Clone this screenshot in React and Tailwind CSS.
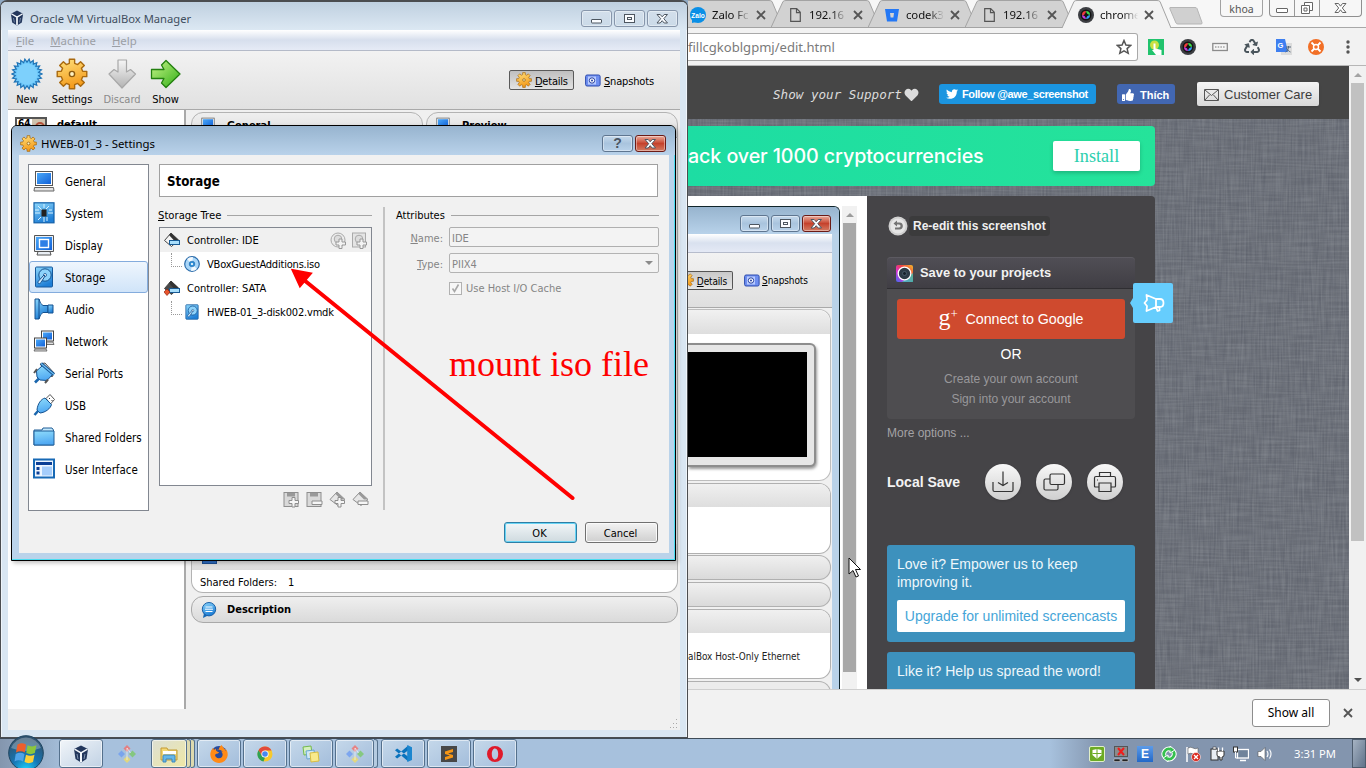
import React from "react";
import { FaTwitter, FaThumbsUp, FaHeart, FaRecycle } from "react-icons/fa";
import { SiFirefoxbrowser } from "react-icons/si";

/* ---------- shared gradients ---------- */
function Defs() {
  return (
    <svg className="absolute h-0 w-0" aria-hidden="true">
      <defs>
        <linearGradient id="blue" x1="0" y1="0" x2="0.4" y2="1"><stop offset="0" stopColor="#8ed8fc" /><stop offset="1" stopColor="#1f7fd6" /></linearGradient>
        <linearGradient id="folder" x1="0" y1="0" x2="0.2" y2="1"><stop offset="0" stopColor="#8fdcfb" /><stop offset="1" stopColor="#4fa8f2" /></linearGradient>
        <linearGradient id="screen" x1="0" y1="0" x2="1" y2="1"><stop offset="0" stopColor="#4aa8f8" /><stop offset="1" stopColor="#1261d8" /></linearGradient>
        <linearGradient id="gold" x1="0" y1="0" x2="0.3" y2="1"><stop offset="0" stopColor="#ffe27e" /><stop offset="1" stopColor="#f49b1c" /></linearGradient>
        <linearGradient id="grey" x1="0" y1="0" x2="0" y2="1"><stop offset="0" stopColor="#f6f6f6" /><stop offset="1" stopColor="#b3b3b3" /></linearGradient>
        <linearGradient id="green" x1="0" y1="0" x2="1" y2="1"><stop offset="0" stopColor="#c9f58a" /><stop offset="1" stopColor="#2fae14" /></linearGradient>
        <linearGradient id="rainbow" x1="0" y1="1" x2="1" y2="0"><stop offset="0" stopColor="#3f6df5" /><stop offset="0.35" stopColor="#d92fd0" /><stop offset="0.65" stopColor="#f0453a" /><stop offset="1" stopColor="#f5c02c" /></linearGradient>
        <radialGradient id="orb" cx="0.5" cy="1" r="0.9"><stop offset="0" stopColor="#1fd5ff" /><stop offset="0.45" stopColor="#1576b4" /><stop offset="1" stopColor="#31536f" /></radialGradient>
      </defs>
    </svg>
  );
}

/* ---------- icons ---------- */
const gearPath = (n, R, r, c) => {
  let d = "";
  for (let i = 0; i < n; i++) {
    const a = (i / n) * 2 * Math.PI - Math.PI / 2, s = Math.PI / n;
    const p = (rad, an) => `${(c + rad * Math.cos(an)).toFixed(2)} ${(c + rad * Math.sin(an)).toFixed(2)}`;
    d += `${i ? "L" : "M"}${p(r, a - s * 0.62)}L${p(R, a - s * 0.45)}L${p(R, a + s * 0.45)}L${p(r, a + s * 0.62)}`;
  }
  return d + "Z";
};
const starPath = (n, R, r, c) => {
  let d = "";
  for (let i = 0; i < n * 2; i++) {
    const a = (i / n) * Math.PI, q = i % 2 ? r : R;
    d += `${i ? "L" : "M"}${(c + q * Math.cos(a)).toFixed(2)} ${(c + q * Math.sin(a)).toFixed(2)}`;
  }
  return d + "Z";
};
const Gear = ({ className }) => (
  <svg viewBox="0 0 32 32" className={className}>
    <path d={gearPath(8, 15, 11, 16)} fill="url(#gold)" stroke="#a9690f" strokeWidth="1.4" strokeLinejoin="round" />
    <circle cx="16" cy="16" r="2.6" fill="#fff3c4" stroke="#8b5a10" strokeWidth="1.4" />
  </svg>
);
const NewIcon = () => (
  <svg viewBox="0 0 32 32" className="h-8 w-8">
    <path d={starPath(22, 15, 11.8, 16)} fill="#6ec9fb" stroke="#1f73b5" strokeWidth="1.2" />
    <circle cx="16" cy="16" r="10.4" fill="#7dd0fc" />
  </svg>
);
const DiscardIcon = () => (
  <svg viewBox="0 0 32 32" className="h-8 w-8">
    <path d="M12 2h8.500v12l4-2.500 5 4.500L16 30 3 16l5-4.500 4 2.500z" fill="url(#grey)" stroke="#a8a8a8" strokeWidth="1.200" strokeLinejoin="round" />
  </svg>
);
const ShowIcon = () => (
  <svg viewBox="0 0 32 32" className="h-8 w-8">
    <path d="M1.500 11.500H14L11.500 7 16 2.500 30 16 16 29.500 11.500 25 14 20.500H1.500z" fill="url(#green)" stroke="#23800f" strokeWidth="1.300" strokeLinejoin="round" />
  </svg>
);
const VBoxIcon = ({ className }) => (
  <svg viewBox="0 0 16 18" className={className}>
    <path d="M8 .500L15 4l-1.500 10L8 17.500 2.500 14 1 4z" fill="#23375c" />
    <path d="M1.500 4.200L8 8l6.500-3.800" fill="none" stroke="#f3f7fb" strokeWidth="1.500" />
    <path d="M8 8v9" fill="none" stroke="#f3f7fb" strokeWidth="2" />
    <path d="M4 9l1 5M12 9l-1 5" fill="none" stroke="#7f93b0" strokeWidth="1" />
  </svg>
);
const Snapshot = () => (
  <svg viewBox="0 0 16 13" className="h-[13px] w-4 shrink-0">
    <rect x="0.600" y="1" width="14.500" height="11" rx="1.500" fill="#6f8ff0" stroke="#2e4cae" />
    <rect x="3" y="2.500" width="8" height="8" fill="#b9ccff" />
    <circle cx="7" cy="6.500" r="2.700" fill="#fff" stroke="#2540a0" />
    <circle cx="7" cy="6.500" r="1" fill="#2540a0" />
  </svg>
);
const PCIcon = () => (
  <>
    <rect x="2.500" y="1.500" width="17" height="14" fill="#fff" stroke="#555" />
    <rect x="4" y="3" width="14" height="11" fill="url(#screen)" />
    <path d="M1.500 17.500h19l.5 3.500H1z" fill="#e4e4e4" stroke="#666" />
  </>
);
const sideIcons = {
  General: <PCIcon />,
  System: (
    <>
      <rect x="1" y="0.800" width="20" height="20" fill="url(#blue)" stroke="#1260a8" strokeWidth="1.2" />
      <path d="M2 11h5M15 11h5M2 8h4M16 8h3M5 4l4 4M16 4l-3 3M5 18l3-3M11 15v5M14 15v4M11 6V2" stroke="#d9f3ff" strokeWidth="1" />
      <rect x="8.500" y="7.500" width="5" height="7" fill="#222" />
    </>
  ),
  Display: (
    <>
      <path d="M1.500 1.500h19v16h-19zM5 17.500h12l1 3.500H4z" fill="#e9eef4" stroke="#555" />
      <rect x="3" y="3" width="16" height="13" fill="url(#screen)" />
      <rect x="6.500" y="5.500" width="9" height="8" fill="#2f7fe6" stroke="#fff" strokeWidth="1.4" />
    </>
  ),
  Storage: (
    <>
      <rect x="2.500" y="1" width="17" height="20" rx="1" fill="url(#blue)" stroke="#16599c" />
      <circle cx="12" cy="9" r="6.200" fill="#8dd3fb" stroke="#14518f" />
      <circle cx="12" cy="9" r="1.500" fill="#fff" stroke="#14518f" strokeWidth="0.800" />
      <path d="M12 10l-4 6.500c-2 2.500-4 .5-2.500-1.500L11 9z" fill="#cfeaff" stroke="#14518f" />
    </>
  ),
  Audio: (
    <>
      <path d="M2 1h4q1 5 4 6.500h5v7h-5Q7 16 6 21H2z" fill="url(#blue)" stroke="#14518f" />
      <path d="M15 7h5v8h-5z" fill="url(#blue)" stroke="#14518f" />
      <path d="M6 1v20" stroke="#14518f" />
    </>
  ),
  Network: (
    <>
      <rect x="8.500" y="1" width="12" height="10" fill="#fff" stroke="#444" />
      <rect x="10" y="2.500" width="9" height="7" fill="url(#screen)" />
      <path d="M13 12h7l1 2.500h-7z" fill="#ddd" stroke="#555" strokeWidth="0.800" />
      <rect x="1.500" y="8" width="12" height="10" fill="#fff" stroke="#444" />
      <rect x="3" y="9.500" width="9" height="7" fill="url(#screen)" />
      <path d="M2 19h11l1 2H1z" fill="#ddd" stroke="#555" strokeWidth="0.800" />
    </>
  ),
  "Serial Ports": (
    <>
      <path d="M7 2l5-1 9 10-2 4z" fill="#e5e5e5" stroke="#555" />
      <path d="M9.500 3.500L20 12l-6 6.500-7-.5-3-3-.5-6z" fill="url(#folder)" stroke="#14518f" />
      <path d="M8 1.500L21 12.500" stroke="#14518f" strokeWidth="3" /><path d="M8 1.500L21 12.500" stroke="#6fc0f5" strokeWidth="1.200" />
      <path d="M1 11l3-4M12 21l3-3.500" stroke="#555" strokeWidth="2" /><path d="M2 20.500l4-4" stroke="#1a66ad" strokeWidth="2.600" />
    </>
  ),
  USB: (
    <>
      <path d="M13 4.500L17 .500l4.500 5-4 4.500z" fill="#fff" stroke="#555" />
      <path d="M16 4l1 1M18.500 6l1 1" stroke="#333" />
      <path d="M12 4l6.500 6.500c-1 4-6 8-11.500 8.500L4 16C4.500 10 8 5 12 4z" fill="url(#folder)" stroke="#14518f" />
      <path d="M5 17l-3.500 4" stroke="#1a66ad" strokeWidth="2.500" />
    </>
  ),
  "Shared Folders": (
    <>
      <path d="M1 4h8l1-2h9l1.500 2v15H1z" fill="#c4e9fd" stroke="#1e5d96" />
      <path d="M1 5h20v14H1z" fill="url(#folder)" stroke="#1e5d96" />
    </>
  ),
  "User Interface": (
    <>
      <rect x="1" y="1.500" width="20" height="18" fill="#eef6ff" stroke="#1769b5" strokeWidth="2" />
      <rect x="3" y="4" width="16" height="3" fill="#0b3f96" />
      <path d="M3.500 9h3v3h-3zM3.500 13.500h3v3h-3z" fill="#0b3f96" />
      <rect x="9" y="8.500" width="10" height="9" fill="#a5cdfb" />
    </>
  ),
};
const Controller = ({ red }) => (
  <svg viewBox="0 0 16 16" className="h-4 w-4 shrink-0">
    <path d="M.500 8.500L7 1l7.500 7-7 6.500z" fill={red ? "#4a4a4a" : "#f4f4f4"} stroke="#444" />
    <path d="M7 1l7.500 7-4 1-5.500-6z" fill="#333" />
    <rect x="5.500" y="8.500" width="10" height="4" fill="#a8defb" stroke="#185a94" />
    {red && <path d="M0 12l3-3 3 3-3 3.500z" fill="#e8542c" stroke="#8f2410" strokeWidth="0.700" />}
  </svg>
);
const Disc = () => (
  <svg viewBox="0 0 16 16" className="h-4 w-4 shrink-0">
    <circle cx="8" cy="8" r="7.300" fill="#a9d6f8" stroke="#2b6cab" strokeWidth="1.200" />
    <path d="M8 8L3 3a7 7 0 0 1 6-2zM8 8l5 5a7 7 0 0 1-6 2z" fill="#fff" opacity="0.850" />
    <circle cx="8" cy="8" r="2.800" fill="#2f8fd6" stroke="#1d68ad" strokeWidth="0.600" /><circle cx="8" cy="8" r="1.100" fill="#fff" />
  </svg>
);
const Disk = () => (
  <svg viewBox="0 0 22 22" className="h-4 w-4 shrink-0">{sideIcons.Storage}</svg>
);
const AddGrey = ({ round }) => (
  <svg viewBox="0 0 17 17" className="h-[17px] w-[17px]">
    {round ? <circle cx="8" cy="8" r="7" fill="#ececec" stroke="#aaa" /> : <rect x="1.500" y="1" width="13" height="14" fill="#e4e4e4" stroke="#aaa" />}
    <circle cx="8" cy="7" r="3.800" fill="#ddd" stroke="#aaa" />
    <path d="M9 7h3v3h3.500v3H12v3.500H9V13H6v-3h3z" fill="#f3f3f3" stroke="#999" />
  </svg>
);
const ToolGrey = ({ diamond, minus }) => (
  <svg viewBox="0 0 17 17" className="h-[17px] w-[17px]">
    {diamond ? (
      <><path d="M1 8.500L8 1l8 7.500-7 6z" fill="#e6e6e6" stroke="#8e8e8e" /><path d="M8 1l8 7.500h-4L6.500 3z" fill="#999" /></>
    ) : (
      <><rect x="1" y="1.500" width="14" height="14" fill="#d9d9d9" stroke="#8e8e8e" /><path d="M4 2h8v3.500H4z" fill="#999" /></>
    )}
    <path d={minus ? "M6 10h10v3.500H6z" : "M9 6.500h3v3h3.500v3H12V16H9v-3.500H6v-3h3z"} fill="#f6f6f6" stroke="#8e8e8e" />
  </svg>
);
const Shutter = ({ className }) => (
  <svg viewBox="0 0 16 16" className={className}>
    <circle cx="8" cy="8" r="8" fill="#3c3e42" /><circle cx="8" cy="8" r="5.500" fill="#141414" />
    <path d="M8 4a4 4 0 0 0-4 4h3z" fill="#ef3b3b" /><path d="M8 4a4 4 0 0 1 4 4l-3-1z" fill="#3ddc4a" />
    <path d="M12 8a4 4 0 0 1-4 4l1-3z" fill="#2f9cf5" /><path d="M8 12a4 4 0 0 1-4-4l3 1z" fill="#c43bd8" /><circle cx="8" cy="8" r="1.800" fill="#111" />
  </svg>
);
const Cross = ({ className }) => (
  <svg viewBox="0 0 10 10" className={className}><path d="M1 1l8 8M9 1L1 9" stroke="currentColor" strokeWidth="1.800" fill="none" /></svg>
);
const Git = () => (
  <svg viewBox="0 0 18 18" className="h-[18px] w-[18px] opacity-80">
    <path d="M9 0l3.500 3.500L9 7 5.500 3.500z" fill="#f2716d" /><path d="M3.500 5.500L7 9l-3.500 3.500L0 9z" fill="#6f9df2" />
    <path d="M14.500 5.500L18 9l-3.500 3.500L11 9z" fill="#7cc96a" /><path d="M9 11l3.500 3.500L9 18l-3.500-3.500z" fill="#f0dc67" />
    <path d="M9 3l3.500 5M9 3v12" stroke="#fff" strokeOpacity="0.700" />
  </svg>
);

/* ---------- window buttons ---------- */
const glyphs = {
  min: <rect x="9.500" y="8.500" width="10" height="3.500" rx="0.500" />,
  max: <><rect x="9.500" y="3.500" width="10" height="8" /><rect x="12.500" y="6.500" width="4" height="2" /></>,
  close: <path d="M9 3.500h3.200l2 2.300 2-2.300h3.300l-3.700 4.200 3.700 4.300h-3.300l-2-2.300-2 2.300H9l3.700-4.300z" />,
};
function WinBtn({ kind, tone, narrow }) {
  const tones = {
    pale: "border-[#8796ab] bg-linear-to-b from-[#d3dfeb] to-[#cbdae8]",
    blue: "border-[#5f7690] bg-linear-to-b from-[#c5d9ec] via-[#a9c4de] to-[#b9d2ea]",
    red: "border-[#6b1b16] bg-linear-to-b from-[#e8ab9c] via-[#c5412c] to-[#d27a62]",
  };
  return (
    <div className={`flex h-[17px] justify-center overflow-hidden rounded-[3px] border ${narrow ? "w-[29px]" : "w-[31px]"} ${tones[tone]} shadow-[inset_0_0_0_1px_rgba(255,255,255,0.4)]`}>
      {kind === "help" ? (
        <div className="font-['Liberation_Sans'] text-[14px] leading-[15px] font-bold text-[#4a5663]">?</div>
      ) : (
        <svg viewBox="0 0 29 15" className="h-[15px] w-[29px] shrink-0" fill="#fafcff" stroke="#4d5660" strokeWidth="1">{glyphs[kind]}</svg>
      )}
    </div>
  );
}

/* ---------- Chrome ---------- */
function Tab({ title, icon, active }) {
  return (
    <div className="relative -mr-3 h-7 w-[109px] shrink-0">
      <svg viewBox="0 0 109 28" className="absolute inset-0 h-7 w-[109px]">
        <path d="M0 28L12 1.500Q13 .5 15 .5H95q2 0 3 1L109 28z" fill={active ? "#f2f2f2" : "#d2d2d2"} />
        <path d={active ? "M0 28L12 1.500Q13 .5 15 .5H95q2 0 3 1L109 28" : "M0 27.500L12 1.500Q13 .5 15 .5H95q2 0 3 1L109 27.500z"} fill="none" stroke="#a3a3a3" />
      </svg>
      <div className="relative flex h-full items-center pt-[2px] pl-4">
        <div className="flex w-4 justify-center">{icon}</div>
        <div className="ml-[6px] w-[39px] font-['Noto_Sans'] text-[11.400px] tracking-[-0.1px] whitespace-nowrap text-[#111] [mask-image:linear-gradient(to_right,black_58%,transparent_98%)]">{title}</div>
        <Cross className="ml-[5px] h-[10px] w-[10px] text-[#555]" />
      </div>
    </div>
  );
}
const Page = () => (
  <svg viewBox="0 0 11 14" className="h-[14px] w-[11px]"><path d="M.7.700h6l3.600 3.600v9H.7zM6.500.700v4h4" fill="none" stroke="#555" strokeWidth="1.200" /></svg>
);
function TabStrip() {
  return (
    <div className="flex h-7 bg-[#f7f7f7] shadow-[inset_0_-1px_0_#a8a8a8]">
      <div className="-ml-[14px] flex">
        <Tab title="Zalo Fc" icon={<svg viewBox="0 0 16 16" className="h-4 w-4"><circle cx="8" cy="8" r="8" fill="#0a8fe6" /><path d="M2 12v4l4-1z" fill="#0a8fe6" /><text x="8" y="10.500" fontSize="6.500" fontWeight="700" fill="#fff" textAnchor="middle" fontFamily="Liberation Sans">Zalo</text></svg>} />
        <Tab title="192.16" icon={<Page />} />
        <Tab title="codek3" icon={<svg viewBox="0 0 14 13" className="h-[13px] w-[14px]"><path d="M0 0h14l-2 12.500H2zM5 4l.6 4.500h2.800L9 4z" fill="#2478f5" fillRule="evenodd" /></svg>} />
        <Tab title="192.16" icon={<Page />} />
        <Tab title="chrome" active icon={<Shutter className="h-4 w-4" />} />
      </div>
      <svg viewBox="0 0 36 28" className="ml-2 h-7 w-9"><path d="M3 7.500h25q1.500 0 2 1l5 14q.5 1.500-1 1.500H11q-1.500 0-2-1L3 9q-.5-1.500 0-1.500z" fill="#d0d0d0" stroke="#b5b5b5" /></svg>
      <div className="ml-[17px] h-[17px] w-[43px] shrink-0 rounded-b border border-t-0 border-[#a2a2a2] text-center font-['Noto_Sans'] text-[10.500px] leading-[18px] text-[#555]">khoa</div>
      <div className="ml-[6px] flex h-[17px] w-[93px] shrink-0 rounded-b border border-t-0 border-[#8f8f8f]">
        <svg viewBox="0 0 91 16" className="h-4 w-[91px]" fill="#fff" stroke="#666">
          <path d="M24.500 0v16M49.500 0v16" stroke="#999" />
          <rect x="6.500" y="8.500" width="11" height="4" rx="0.500" />
          <path d="M34.500 2.500h8v8h-8z" /><path d="M31.500 5.500h8v8h-8zM34 8h3v3h-3z" />
          <path d="M65 3.500h3.500l2 2.700 2-2.700H76L72.300 8l3.700 4.500h-3.500l-2-2.700-2 2.700H65L68.700 8z" />
        </svg>
      </div>
    </div>
  );
}
function Toolbar() {
  return (
    <div className="flex h-[38px] items-center border-b border-[#b6b6b6] bg-[#f2f2f2]">
      <div className="flex h-[28px] w-[450px] items-center justify-between rounded-r-[3px] border border-l-0 border-[#a9a9a9] bg-white pr-[5px]">
        <span className="font-['Noto_Sans'] text-[13.050px] text-[#7a7a7a]">fillcgkoblgpmj/edit.html</span>
        <svg viewBox="0 0 16 16" className="h-4 w-4"><path d="M8 1.500l1.900 4.500 4.800.4-3.600 3.200 1.100 4.700L8 11.800l-4.200 2.500 1.100-4.700L1.300 6.400l4.800-.4z" fill="none" stroke="#555" strokeWidth="1.500" /></svg>
      </div>
      <div className="ml-[10px] flex items-center gap-4">
        <svg viewBox="0 0 16 16" className="h-4 w-4"><rect width="16" height="16" fill="#21c36d" /><circle cx="6.500" cy="6" r="4.500" fill="#e4e63a" opacity="0.850" /><path d="M5.500 4.500h2v5l6 1.500v5H8l-4-5h1.500z" fill="#fff" /></svg>
        <Shutter className="h-4 w-4" />
        <svg viewBox="0 0 16 16" className="h-4 w-4"><rect x="0.800" y="4.500" width="14.500" height="7" fill="#f6f6f6" stroke="#8b8b8b" strokeWidth="1.300" /><path d="M3 8h10" stroke="#777" strokeDasharray="1.500 1.200" /></svg>
        <FaRecycle className="h-4 w-4 text-[#4a555c]" />
        <svg viewBox="0 0 16 16" className="h-4 w-4"><rect x="5" y="4" width="11" height="12" fill="#dcdcdc" /><path d="M0 0h9l3 13H0z" fill="#3e7ff0" /><text x="1.500" y="8.500" fontSize="7.500" fontWeight="700" fill="#fff" fontFamily="Liberation Sans">G</text><path d="M10 8h5M12.500 7v1c0 2-1 4-3 5M10.500 9c1 2 2 3 4 4" stroke="#54677a" fill="none" /></svg>
        <svg viewBox="0 0 16 16" className="h-4 w-4"><circle cx="8" cy="8" r="8" fill="#f26f26" /><path d="M3.500 3.500l2.500 2.500M12.500 3.500L10 6M3.500 12.500L6 10M12.500 12.500L10 10" stroke="#fff" strokeWidth="1.800" /><circle cx="8" cy="8" r="2.500" fill="none" stroke="#fff" strokeWidth="1.400" /></svg>
        <svg viewBox="0 0 16 16" className="h-4 w-4"><g fill="#555"><circle cx="8" cy="3" r="1.700" /><circle cx="8" cy="8" r="1.700" /><circle cx="8" cy="13" r="1.700" /></g></svg>
      </div>
    </div>
  );
}
function SiteHeader() {
  return (
    <div className="flex h-[53px] shrink-0 items-center bg-[#464646] pt-[3px] font-['Liberation_Sans']">
      <div className="ml-[85px] flex w-[147px] items-center gap-[2px] pt-[2px] text-[#dcdcdc]">
        <span className="font-['DejaVu_Sans_Mono'] text-[12.600px] whitespace-nowrap italic">Show your Support</span>
        <FaHeart className="h-[14px] w-[15px] shrink-0" />
      </div>
      <div className="ml-[19px] flex h-5 w-[157px] items-center rounded-[3px] bg-[#1b95e0] pl-[7px] text-[11px] font-bold tracking-[-0.38px] whitespace-nowrap text-white"><FaTwitter className="mr-[4px] h-3 w-3" />Follow @awe_screenshot</div>
      <div className="ml-[21px] flex h-5 w-[58px] items-center rounded-[3px] bg-[#4267b2] pt-px pl-[5px] text-[11px] font-bold text-white"><FaThumbsUp className="mr-[6px] h-3 w-3" />Thích</div>
      <div className="ml-[22px] flex h-6 w-[122px] items-center rounded-[2px] bg-linear-to-b from-[#f5f5f5] to-[#d8d8d8] pt-px pl-[7px] text-[13px] whitespace-nowrap text-[#3c3c3c] shadow">
        <svg viewBox="0 0 15 12" className="mr-[5px] h-3 w-[15px]"><path d="M.5.500h14v11H.500zM1 1l6.500 5.500L14 1M1 11l4.500-5M14 11L9.500 6" fill="none" stroke="#555" /></svg>
        Customer Care
      </div>
    </div>
  );
}
function Banner() {
  return (
    <div className="flex h-[60px] w-[467px] items-center justify-between rounded-r bg-linear-to-r from-[#1ddda3] to-[#25e39a] pr-[15px]">
      <span className="font-['Inter'] text-[19.700px] font-medium tracking-[-0.1px] whitespace-nowrap text-white">ack over 1000 cryptocurrencies</span>
      <div className="flex h-[30px] w-[87px] items-center justify-center rounded-[2px] bg-white font-['Liberation_Serif'] text-[18.200px] text-[#2ccfae] shadow-[0_2px_4px_rgba(0,0,0,0.2)]">Install</div>
    </div>
  );
}
function Screenshot() {
  return (
    <div className="flex h-[493px] w-[179px] shrink-0 bg-white pt-[10px]">
      <div className="flex h-[483px] w-[152px] flex-col overflow-hidden rounded-tr-md border-t border-r border-[#10252b] bg-[#b9d2e8]">
        <div className="flex h-[27px] shrink-0 items-center justify-end gap-[2px] bg-linear-to-b from-[#97b4ce] to-[#b8d2ea] pt-[6px] pr-2"><WinBtn kind="min" tone="blue" narrow /><WinBtn kind="max" tone="blue" narrow /><WinBtn kind="close" tone="red" narrow /></div>
        <div className="flex w-[144px] flex-1 flex-col bg-[#f0f0f0]">
          <div className="h-[19px] shrink-0 border-b border-[#b6bccc] bg-linear-to-b from-white via-[#d9e1ef] to-[#e4e9f5]" />
          <div className="flex h-[55px] shrink-0 items-center border-b border-[#a9a9a9] bg-linear-to-b from-[#f2f2f2] to-[#dfdfdf]">
            <div className="flex h-[19px] w-[45px] items-center justify-end rounded-r-[2px] border border-l-0 border-[#555] bg-linear-to-b from-[#c9c9c9] to-[#e6e6e6] pr-[5px]">
              <Gear className="-ml-3 h-4 w-4 shrink-0" /><span className="ml-[3px] pt-[4px] text-[10px] tracking-[-0.150px]"><u>D</u>etails</span>
            </div>
            <span className="ml-[11px] flex items-center gap-[2px] text-[10px]"><Snapshot /><span className="pt-px tracking-[-0.1px]"><u>S</u>napshots</span></span>
          </div>
          <div className="h-px shrink-0" />
          <div className="h-[172px] w-[143px] shrink-0 rounded-r-xl border border-l-0 border-[#bdbdbd] bg-white">
            <div className="h-6 rounded-tr-xl bg-linear-to-b from-[#f1f1f1] to-[#dedede]" />
            <div className="mt-[9px] h-[124px] w-[128px] rounded-r-md border-2 border-l-0 border-[#8d8d8d] bg-[#e6e6e6] pt-[7px] shadow-[1px_2px_3px_rgba(0,0,0,0.4)]"><div className="h-[105px] w-[119px] bg-black" /></div>
          </div>
          <div className="mt-[2px] h-[71px] w-[143px] shrink-0 overflow-hidden rounded-r-xl border border-l-0 border-[#b0b0b0] bg-white"><div className="h-[23px] bg-linear-to-b from-[#f0f0f0] to-[#dedede]" /></div>
          <div className="mt-px h-[25px] w-[143px] shrink-0 rounded-r-xl border border-l-0 border-[#b0b0b0] bg-linear-to-b from-[#f0f0f0] to-[#dadada]" />
          <div className="mt-[2px] h-[25px] w-[143px] shrink-0 rounded-r-xl border border-l-0 border-[#b0b0b0] bg-linear-to-b from-[#f0f0f0] to-[#dadada]" />
          <div className="mt-[2px] h-[70px] w-[143px] shrink-0 overflow-hidden rounded-r-xl border border-l-0 border-[#b0b0b0] bg-white">
            <div className="h-[23px] bg-linear-to-b from-[#f0f0f0] to-[#dedede]" />
            <div className="flex h-[46px] items-center pt-[2px] text-[9.850px] whitespace-nowrap text-[#222]">alBox Host-Only Ethernet</div>
          </div>
          <div className="mt-[2px] h-[25px] w-[143px] shrink-0 rounded-tr-xl border border-l-0 border-[#b0b0b0] bg-[#ececec]" />
        </div>
      </div>
      <div className="ml-[2px] flex h-[483px] w-[15px] flex-col items-center bg-[#f1f1f1]">
        <svg viewBox="0 0 8 4" className="mt-[7px] mb-[6px] h-1 w-2 shrink-0"><path d="M0 4l4-4 4 4z" fill="#9c9c9c" /></svg>
        <div className="h-[449px] w-[13px] bg-[#a8a8a8]" />
      </div>
    </div>
  );
}
function RoundBtn({ children }) {
  return (
    <div className="flex h-9 w-9 items-center justify-center rounded-full bg-linear-to-b from-[#f8f8f8] to-[#cfcfcf] shadow">
      <svg viewBox="0 0 24 24" className="h-6 w-6" fill="none" stroke="#333" strokeWidth="1.200">{children}</svg>
    </div>
  );
}
function SavePanel() {
  return (
    <div className="flex h-[493px] w-[288px] flex-col overflow-hidden rounded-tr bg-[#454447] px-5 pt-5 font-['Liberation_Sans']">
      <div className="flex h-5 shrink-0 items-center">
        <svg viewBox="0 0 20 20" className="mr-px ml-px h-5 w-5"><circle cx="10" cy="10" r="9.500" fill="#d0d0d0" /><circle cx="10" cy="10" r="7.500" fill="#e6e6e6" /><path d="M5.500 7.500L9 4.500v2h2.500c4.500 0 4.500 7 0 7H7v-2h4c2 0 2-3 0-3H9v2z" fill="#737373" /></svg>
        <div className="flex h-5 items-center rounded-[4px] bg-[#3b3b3c] px-1 text-[12px] font-bold whitespace-nowrap text-[#f0f0f0]">Re-edit this screenshot</div>
      </div>
      <div className="mt-[21px] h-[162px] w-[248px] shrink-0 rounded-[4px] bg-[#4e4d50]">
        <div className="flex h-8 items-center rounded-t-[4px] border-t border-b border-t-[#5c5a61] border-b-[#2f2e32] bg-linear-to-b from-[#504e55] to-[#403e44] pl-[9px] text-[12.900px] font-bold text-[#f2f2f2]">
          <svg viewBox="0 0 17 17" className="mr-[7px] h-[17px] w-[17px]"><rect width="17" height="17" rx="2" fill="url(#rainbow)" /><path d="M17 8v9H6z" fill="#35c8b5" opacity="0.800" /><circle cx="8.500" cy="8.500" r="6.300" fill="#2d3b46" stroke="#fff" strokeWidth="1.300" /><circle cx="8.500" cy="8.500" r="2" fill="#16222b" stroke="#5c7283" strokeWidth="0.600" /></svg>
          Save to your projects
        </div>
        <div className="flex flex-col items-center px-[10px] pt-[10px]">
          <div className="flex h-10 w-[228px] items-center justify-center rounded-[3px] bg-[#cf4a2e] text-[14.300px] tracking-[-0.080px] whitespace-nowrap text-white">
            <span className="mr-[9px] flex h-5 w-[18px] font-['Liberation_Serif'] text-[24px] leading-[16px]">g<span className="text-[13px] leading-[9px]">+</span></span>Connect to Google
          </div>
          <div className="mt-[7px] text-[14px] leading-4 text-white">OR</div>
          <div className="mt-[7px] text-[12.050px] leading-5 text-[#98979a]">Create your own account</div>
          <div className="text-[12.050px] leading-5 text-[#98979a]">Sign into your account</div>
        </div>
      </div>
      <div className="mt-[4px] shrink-0 text-[12px] leading-5 text-[#a3a2a5]">More options ...</div>
      <div className="mt-[21px] flex h-9 shrink-0 items-center text-[14px] font-bold text-[#f3f3f3]">
        <span className="w-[98px]">Local Save</span>
        <div className="flex gap-[15px]">
          <RoundBtn><path d="M12 1.500v14M7 12.500l5 3 5-3M2 12v8q0 1.500 1.500 1.500h17q1.500 0 1.500-1.500v-8" /></RoundBtn>
          <RoundBtn><rect x="8" y="4" width="14.500" height="10.500" rx="1.500" /><path d="M8 9H3.500Q2 9 2 10.500v8Q2 20 3.500 20h11q1.500 0 1.500-1.500V15" /></RoundBtn>
          <RoundBtn><path d="M6.500 6V2.500h11V6M6 17H2.500q-1 0-1-1V8q0-1.500 1.500-1.500h18q1.500 0 1.500 1.500v8q0 1-1 1H18" /><path d="M6 13h12v8.500H6zM4 10h1" /></RoundBtn>
        </div>
      </div>
      <div className="mt-[45px] h-[97px] shrink-0 rounded-[3px] bg-[#3d91bd] px-[10px] pt-[10px] text-[14px] leading-[18px] text-[#eef7fb]">
        <div className="h-9">Love it? Empower us to keep<br />improving it.</div>
        <div className="mt-[9px] flex h-8 items-center justify-center rounded-[2px] bg-white text-[14px] whitespace-nowrap text-[#45a5d8]">Upgrade for unlimited screencasts</div>
      </div>
      <div className="mt-[10px] h-[60px] shrink-0 rounded-t-[3px] bg-[#3d91bd] px-[10px] pt-[10px] text-[14px] leading-[18px] text-[#eef7fb]">Like it? Help us spread the word!</div>
    </div>
  );
}
function Fabric() {
  return (
    <svg className="absolute inset-0 h-full w-full">
      <filter id="weft" x="0" y="0" width="100%" height="100%" colorInterpolationFilters="sRGB"><feTurbulence type="fractalNoise" baseFrequency="0.03 0.6" numOctaves="1" seed="3" /><feColorMatrix values="0 0 0 0 0.66  0 0 0 0 0.68  0 0 0 0 0.7  0.5 0 0 0 -0.17" /></filter>
      <filter id="warp" x="0" y="0" width="100%" height="100%" colorInterpolationFilters="sRGB"><feTurbulence type="fractalNoise" baseFrequency="0.6 0.03" numOctaves="1" seed="8" /><feColorMatrix values="0 0 0 0 0.66  0 0 0 0 0.68  0 0 0 0 0.7  0.45 0 0 0 -0.17" /></filter>
      <filter id="dark" x="0" y="0" width="100%" height="100%" colorInterpolationFilters="sRGB"><feTurbulence type="fractalNoise" baseFrequency="0.6 0.04" numOctaves="1" seed="21" /><feColorMatrix values="0 0 0 0 0.25  0 0 0 0 0.27  0 0 0 0 0.33  0.5 0 0 0 -0.19" /></filter>
      <rect width="100%" height="100%" fill="#686c75" />
      <rect width="100%" height="100%" filter="url(#weft)" />
      <rect width="100%" height="100%" filter="url(#dark)" />
      <rect width="100%" height="100%" filter="url(#warp)" />
    </svg>
  );
}
function Chrome() {
  return (
    <div className="absolute top-0 left-[688px] flex h-[738px] w-[678px] flex-col overflow-hidden bg-[#f2f2f2]">
      <TabStrip />
      <Toolbar />
      <div className="flex h-[623px]">
        <div className="relative flex w-[661px] flex-col overflow-hidden">
          <Fabric />
          <div className="relative flex flex-col">
            <SiteHeader />
            <div className="h-[7px]" />
            <Banner />
            <div className="h-[10px]" />
            <div className="flex"><Screenshot /><SavePanel /></div>
            <div className="absolute top-[217px] left-[442px] flex items-center">
              <svg viewBox="0 0 3 10" className="h-[10px] w-[3px]"><path d="M3 0v10L0 5z" fill="#66cdfd" /></svg>
              <div className="flex h-10 w-10 items-center justify-center rounded-[2px] bg-[#66cdfd]">
                <svg viewBox="0 0 24 20" className="h-5 w-6" fill="none" stroke="#fff" strokeWidth="1.800" strokeLinejoin="round"><path d="M5.500 2l9.500 4h4q3.500 0 3.500 4T19 14h-4l-9.500 4 .5-5-2.500-3L6 7zM15 6v8M15 14l1.500 4 2-.5V14" /></svg>
              </div>
            </div>
          </div>
        </div>
        <div className="flex w-[17px] flex-col items-center bg-[#f1f1f1]">
          <svg viewBox="0 0 8 4" className="mt-[7px] mb-[6px] h-1 w-2 shrink-0"><path d="M0 4l4-4 4 4z" fill="#a3a3a3" /></svg>
          <div className="h-[458px] w-[13px] bg-[#c1c1c1]" />
          <svg viewBox="0 0 8 4" className="mt-auto mb-[7px] h-1 w-2"><path d="M0 0h8L4 4z" fill="#505050" /></svg>
        </div>
      </div>
      <div className="flex h-[49px] items-center justify-end border-t border-[#cfcfcf] bg-[#f2f2f2] pr-[13px] pb-[2px] font-['Noto_Sans'] text-[12px] text-black">
        <div className="flex h-7 w-[78px] items-center justify-center rounded-[3px] border border-[#8d8d8d] bg-white">Show all</div>
        <Cross className="ml-[13px] h-[10px] w-[10px] text-[#555]" />
      </div>
    </div>
  );
}

/* ---------- VirtualBox ---------- */
const MiniPC = () => <svg viewBox="0 0 22 22" className="h-4 w-4"><PCIcon /></svg>;
const Tool = ({ icon, label, dim, w }) => (
  <div className={`flex flex-col items-center ${w} ${dim ? "text-[#8a8a8a]" : ""}`}>{icon}<span className="mt-[2px] leading-4">{label}</span></div>
);
function VBoxWindow() {
  return (
    <div className="absolute top-0 left-0 flex h-[738px] w-[688px] flex-col rounded-t-[7px] border border-t-2 border-[#4b4d50] bg-[#d9e6f2] px-[6px] pb-[6px] shadow-[inset_1px_0_0_#eef4fa,inset_-1px_0_0_#eef4fa]">
      <div className="-mx-[6px] flex h-7 shrink-0 items-center rounded-t-[5px] bg-linear-to-b from-[#bfd0e0] to-[#dce8f3] pr-[9px] pl-[9px]">
        <VBoxIcon className="mt-[3px] h-[16px] w-[14px]" />
        <span className="ml-[6px] pt-[5px] font-['Noto_Sans'] text-[11.200px] text-[#3f4e5e]">Oracle VM VirtualBox Manager</span>
        <div className="ml-auto flex gap-[2px] pt-[5px]"><WinBtn kind="min" tone="pale" /><WinBtn kind="max" tone="pale" /><WinBtn kind="close" tone="pale" /></div>
      </div>
      <div className="ml-px flex h-[700px] w-[672px] flex-col bg-[#f0f0f0]">
        <div className="flex h-[21px] items-center gap-[16px] border-b border-[#b4bac8] bg-linear-to-b from-white via-[#d7dfed] to-[#e6ebf6] pt-[2px] pl-2 font-['Noto_Sans'] text-[11.400px] text-[#9c9fa5]"><span><u>F</u>ile</span><span><u>M</u>achine</span><span><u>H</u>elp</span></div>
        <div className="flex h-[59px] items-start border-b border-[#a9a9a9] bg-linear-to-b from-[#f2f2f2] to-[#e1e1e1] pt-[7px] pr-[26px]">
          <Tool w="w-[38px]" icon={<NewIcon />} label="New" />
          <Tool w="w-[52px]" icon={<Gear className="h-8 w-8" />} label="Settings" />
          <Tool w="w-[48px]" dim icon={<DiscardIcon />} label="Discard" />
          <Tool w="w-[39px]" icon={<ShowIcon />} label="Show" />
          <div className="mt-3 ml-auto flex h-5 w-[65px] items-center rounded-[2px] border border-[#5a5a5a] bg-linear-to-b from-[#bfbfbf] to-[#e3e3e3] pl-[6px]"><Gear className="mr-[3px] h-4 w-4" /><span className="pt-[4px] tracking-[-0.2px]"><u>D</u>etails</span></div>
          <div className="mt-[14px] ml-[11px] flex items-center gap-[3px] tracking-[-0.150px]"><Snapshot /><span className="pt-[3px]"><u>S</u>napshots</span></div>
        </div>
        <div className="flex h-[599px]">
          <div className="flex w-[176px] items-start bg-white pt-[7px] pl-[7px] text-[11px] font-bold">
            <div className="flex h-5 w-8 border-2 border-[#555] bg-[#cfc3ae] text-[10px] leading-[10px]"><span className="bg-white px-px">64</span><span className="mt-[3px] ml-[3px] h-3 w-3 rounded-full border-2 border-[#b5533c]" /></div>
            <span className="ml-[10px] pt-px">default</span>
          </div>
          <div className="w-[7px] border-l-2 border-[#a9a9a9]" />
          <div className="flex w-[487px] flex-col pt-[2px] text-[11px]">
            <div className="flex gap-[3px] font-bold">
              <div className="flex h-[26px] w-[232px] items-center gap-[11px] rounded-t-xl border border-[#b3b3b3] bg-linear-to-b from-[#efefef] to-[#dedede] pl-[8px]"><MiniPC /><span className="pt-[2px]">General</span></div>
              <div className="flex h-[26px] w-[252px] items-center gap-[11px] rounded-t-xl border border-[#b3b3b3] bg-linear-to-b from-[#efefef] to-[#dedede] pl-[8px]"><MiniPC /><span className="pt-[2px]">Preview</span></div>
            </div>
            <div className="h-[406px] border-x border-[#b3b3b3] bg-white" />
            <div className="h-[49px] rounded-b-xl border border-t-0 border-[#b3b3b3] bg-white">
              <div className="flex h-[26px] items-end bg-linear-to-b from-[#efefef] to-[#dcdcdc] pb-[6px] pl-[10px]"><div className="h-[12px] w-[15px] border border-[#1b4f95] bg-[#2f6fc6]" /></div>
              <div className="flex h-[23px] items-center gap-[11px] pt-[2px] pl-[8px]"><span>Shared Folders:</span><span>1</span></div>
            </div>
            <div className="mt-[3px] flex h-[27px] items-center gap-[10px] rounded-xl border border-[#a9a9a9] bg-linear-to-b from-[#efefef] to-[#dadada] pl-[9px] font-bold">
              <svg viewBox="0 0 16 16" className="h-4 w-4"><path d="M3 11l-1 5 5-2.500z" fill="#1668b4" /><circle cx="8" cy="7.200" r="6.700" fill="url(#blue)" stroke="#1a5fa6" /><path d="M4.500 5h7M4 7.200h8M4.500 9.500h7" stroke="#fff" /></svg>
              <span className="pt-px">Description</span>
            </div>
          </div>
        </div>
        <div className="flex flex-1 items-end justify-end p-[2px]">
          <svg viewBox="0 0 9 9" className="h-[9px] w-[9px]" fill="#a9a9a9"><path d="M7 0h1v1H7zM7 4h1v1H7zM7 8h1v1H7zM4 4h1v1H4zM4 8h1v1H4zM1 8h1v1H1z" /></svg>
        </div>
      </div>
    </div>
  );
}
const sections = ["General", "System", "Display", "Storage", "Audio", "Network", "Serial Ports", "USB", "Shared Folders", "User Interface"];
const Group = ({ children }) => (
  <div className="flex h-4 items-center gap-[6px]"><span className="pt-[2px] whitespace-nowrap">{children}</span><div className="h-px flex-1 bg-[#a5a5a5]" /></div>
);
const Elbow = () => <div className="-mt-[8px] mr-[2px] h-[14px] w-[11px] border-b border-l border-dotted border-[#999]" />;
function SettingsDialog() {
  return (
    <div className="absolute top-[125px] left-[11px] flex h-[436px] w-[665px] flex-col rounded-t-[6px] border border-black bg-[#bad3ea] pr-[6px] pl-[7px] shadow-[inset_-1px_-1px_0_#4bdcf0,2px_2px_4px_rgba(0,0,0,0.25)]">
      <div className="-mr-[6px] -ml-[7px] flex h-[29px] shrink-0 items-center rounded-t-[5px] bg-linear-to-b from-[#97b4cf] to-[#b9d2ea] pr-[9px] pl-[8px]">
        <Gear className="mt-[5px] h-[17px] w-[17px]" />
        <span className="ml-[4px] pt-[6px] font-['Noto_Sans'] text-[11.400px] text-black">HWEB-01_3 - Settings</span>
        <div className="ml-auto flex gap-[2px] pt-[5px]"><WinBtn kind="help" tone="blue" /><WinBtn kind="close" tone="red" /></div>
      </div>
      <div className="flex h-[398px] w-[650px] flex-col bg-[#f1f1f1] pt-[9px] pl-[9px]">
        <div className="flex h-[347px]">
          <div className="w-[121px] border border-[#828790] bg-white text-[11.450px]">
            {sections.map((s) => (
              <div key={s} className={`flex h-8 items-center rounded-[3px] border pl-[3px] ${s === "Storage" ? "border-[#84acdd] bg-linear-to-b from-[#eff6fd] to-[#d0e4f9]" : "border-transparent"}`}>
                <svg viewBox="0 0 22 22" className="h-[22px] w-[22px] shrink-0">{sideIcons[s]}</svg>
                <span className="ml-[10px] pt-[2px] whitespace-nowrap">{s}</span>
              </div>
            ))}
          </div>
          <div className="ml-[10px] w-[500px]">
            <div className="flex h-[33px] w-[499px] items-center border border-[#a0a0a0] bg-white pt-[3px] pl-[7px] font-['DejaVu_Sans_Condensed'] text-[13.200px] font-bold">Storage</div>
            <div className="flex pt-[10px]">
              <div className="w-[213px]">
                <Group><span className="-ml-px text-[11.200px]"><u>S</u>torage Tree</span></Group>
                <div className="mt-[4px] h-[259px] border border-[#828790] bg-white">
                  <div className="flex h-6 items-center gap-[7px] bg-[#f0f0f0] pr-[3px] pl-[4px]"><Controller /><span className="pt-[2px]">Controller: IDE</span><span className="ml-auto flex gap-1"><AddGrey round /><AddGrey /></span></div>
                  <div className="flex h-6 items-center pl-[11px]"><Elbow /><Disc /><span className="ml-[7px] pt-[2px] tracking-[-0.2px] whitespace-nowrap">VBoxGuestAdditions.iso</span></div>
                  <div className="flex h-6 items-center gap-[7px] pl-[4px]"><Controller red /><span className="pt-[2px]">Controller: SATA</span></div>
                  <div className="flex h-6 items-center pl-[11px]"><Elbow /><Disk /><span className="ml-[7px] pt-[2px] tracking-[-0.180px] whitespace-nowrap">HWEB-01_3-disk002.vmdk</span></div>
                </div>
                <div className="mt-[5px] flex justify-end gap-[6px] pr-[3px]"><ToolGrey /><ToolGrey minus /><ToolGrey diamond /><ToolGrey diamond minus /></div>
              </div>
              <div className="ml-[11px] h-[303px] w-[2px] bg-[#c3c3c3]" />
              <div className="ml-[11px] w-[263px] text-[#858585]">
                <Group><span className="text-black">Attributes</span></Group>
                <div className="mt-[4px] flex h-5 items-center"><span className="w-[47px] pt-[3px] text-right"><u>N</u>ame:</span><div className="ml-[6px] flex h-5 w-[210px] items-center rounded-[2px] border border-[#afafaf] bg-[#f3f3f3] pt-[3px] pl-[2px]">IDE</div></div>
                <div className="mt-[6px] flex h-5 items-center"><span className="w-[47px] pt-[3px] text-right"><u>T</u>ype:</span><div className="ml-[6px] flex h-5 w-[210px] items-center justify-between rounded-[2px] border border-[#b3b3b3] bg-[#f3f3f3] pr-[5px] pl-[2px]"><span className="pt-[3px]">PIIX4</span><svg viewBox="0 0 8 4" className="h-1 w-2"><path d="M0 0h8L4 4z" fill="#8b8b8b" /></svg></div></div>
                <div className="mt-[8px] ml-[53px] flex items-center"><svg viewBox="0 0 13 13" className="mr-[4px] h-[13px] w-[13px]"><rect x="0.500" y="0.500" width="12" height="12" fill="#f7f7f7" stroke="#b1b1b1" /><path d="M3.500 6.500l2 3 4-7" fill="none" stroke="#a8a8a8" strokeWidth="1.600" /></svg><span className="pt-px">Use Host I/O Cache</span></div>
              </div>
            </div>
          </div>
        </div>
        <div className="mt-[11px] flex justify-end gap-2 pr-[11px]">
          <div className="flex h-[21px] w-[73px] items-center justify-center rounded-[3px] border border-[#2c7ea5] bg-linear-to-b from-[#f1f6f8] to-[#cfdadf] pt-[2px] pr-[2px] shadow-[inset_0_0_0_1px_#67d4f5]">OK</div>
          <div className="flex h-[21px] w-[73px] items-center justify-center rounded-[3px] border border-[#707070] bg-linear-to-b from-[#f3f3f3] to-[#cfcfcf] pt-[2px] pr-[2px] shadow-[inset_0_0_0_1px_#fafafa]">Cancel</div>
        </div>
      </div>
    </div>
  );
}

/* ---------- taskbar ---------- */
const TaskBtn = ({ children, tone, stack, ml }) => (
  <div className={`flex ${ml}`}>
    <div className={`flex h-[29px] items-center justify-center rounded-[3px] border border-[#54708c] shadow-[inset_0_0_0_1px_rgba(255,255,255,0.55)] ${tone === "active" ? "w-[44px] bg-linear-to-br from-[#f1f5f9] to-[#c1d2e4]" : tone === "yellow" ? "w-[36px] bg-linear-to-br from-[#dcdfd2] to-[#efe7a4]" : stack ? "w-[39px] bg-linear-to-br from-[#c5d8ea] to-[#a3bddb]" : "w-[44px] bg-linear-to-br from-[#c5d8ea] to-[#a3bddb]"}`}>{children}</div>
    {stack && <div className={`h-[29px] w-1 rounded-r-[3px] border border-l-0 border-[#54708c] ${tone === "yellow" ? "bg-[#ddd9ae]" : "bg-[#b5cbe1]"}`} />}
    {tone === "yellow" && <div className="h-[29px] w-1 rounded-r-[3px] border border-l-0 border-[#54708c] bg-[#ddd9ae]" />}
  </div>
);
function Taskbar() {
  return (
    <div className="absolute top-[738px] left-0 flex h-[30px] w-[1366px] items-center border-t border-[#3f4b57] bg-linear-to-r from-[#8496ae] via-[#a7c1dd] via-[5%] to-[#a7c1dd]">
      <div className="ml-[8px] w-[50px]">
        <svg viewBox="0 0 36 36" className="-mt-[2px] h-9 w-9">
          <circle cx="18" cy="18" r="17.300" fill="url(#orb)" stroke="#1f4560" />
          <path d="M3 13a16 16 0 0 1 30 0q-15 6-30 0z" fill="#fff" opacity="0.280" />
          <path d="M9.500 9.500q4.500-2.500 8.500 0l-1.200 8q-4.200-2.300-8.800 0z" fill="#ee5f2c" /><path d="M19.500 10.300q4.500 2.300 9 0l-1.700 7.700q-4.500 2.300-8.500 0z" fill="#8cc63c" />
          <path d="M7.700 19q4.500-2.300 8.800 0l-1.500 7.500q-4.200-2.300-8.500 0z" fill="#4fa3e8" /><path d="M18 19.700q4.200 2.300 8.500 0l-1.500 7.300q-4.200 2.300-8.500 0z" fill="#fbd03a" />
        </svg>
      </div>
      <TaskBtn tone="active" ml="ml-px"><VBoxIcon className="h-[18px] w-4" /></TaskBtn>
      <div className="ml-[15px] w-[18px]"><Git /></div>
      <TaskBtn tone="yellow" stack ml="ml-[15px]">
        <svg viewBox="0 0 18 18" className="h-[18px] w-[18px]"><path d="M1 3h6l1 2h9v10H1z" fill="#f4d873" stroke="#c39a35" /><path d="M3 6h13v3H3z" fill="#fff" /><path d="M3 17V11q0-1 1-1h10q1 0 1 1v6h-3v-3H6v3z" fill="#66b7e8" stroke="#3d86bd" /></svg>
      </TaskBtn>
      <TaskBtn ml="ml-[2px]">
        <div className="flex h-4 w-4 items-center justify-center rounded-full bg-[#264b9e]"><SiFirefoxbrowser className="h-[18px] w-[18px] shrink-0 text-[#ff8a16]" /></div>
      </TaskBtn>
      <TaskBtn ml="ml-[2px]">
        <svg viewBox="0 0 16 16" className="h-4 w-4"><circle cx="8" cy="8" r="7.500" fill="#f7c92d" /><path d="M1.500 4.200A7.500 7.500 0 0 1 14.500 4.500L8 4.500 5 10z" fill="#e24a3b" /><path d="M1.500 4.200L5 10l3 1.500-1.500 4A7.500 7.500 0 0 1 1.500 4.200z" fill="#2ea154" /><circle cx="8" cy="8" r="3.600" fill="#fff" /><circle cx="8" cy="8" r="2.800" fill="#4688f1" /></svg>
      </TaskBtn>
      <TaskBtn ml="ml-[2px]">
        <svg viewBox="0 0 18 18" className="h-[18px] w-[18px]"><path d="M1 2l8-1 1 8-8 1z" fill="#d5f1bd" stroke="#74b94c" /><path d="M4 6l8-1 1 8-8 1z" fill="#cfe7f7" stroke="#69a7cf" /><path d="M8 8l8-1 1 9-8 1z" fill="#f9ea8c" stroke="#d8bd42" /></svg>
      </TaskBtn>
      <TaskBtn stack ml="ml-[2px]"><Git /></TaskBtn>
      <TaskBtn ml="ml-[3px]">
        <svg viewBox="0 0 16 16" className="h-[17px] w-[17px]"><path d="M0 5L2 3.300 12.500 11v4.500zM0 11l2 1.700L12.500 5V.500z" fill="#0a73bd" /><path d="M11.500 0L16 2v12l-4.500 2z" fill="#1c86cf" /></svg>
      </TaskBtn>
      <TaskBtn ml="ml-[2px]">
        <svg viewBox="0 0 16 16" className="h-4 w-4"><rect width="16" height="16" fill="#474747" /><path d="M12 3v3L7 7.500l5 1.500v2.500L4 14v-3l5-1.500L4 8V5.500z" fill="#f79614" /></svg>
      </TaskBtn>
      <TaskBtn ml="ml-[2px]">
        <svg viewBox="0 0 16 16" className="h-4 w-4"><path d="M8 0a8 8 0 1 0 0 16A8 8 0 1 0 8 0zm0 2.500c2 0 3.200 2.400 3.200 5.500S10 13.500 8 13.500 4.800 11 4.800 8 6 2.500 8 2.500z" fill="#e01a2b" fillRule="evenodd" /></svg>
      </TaskBtn>
      <div className="ml-auto flex h-full w-[316px] items-center bg-linear-to-r from-[#a7c1dd] via-[#8395ae] via-[16%] to-[#8395ae] pl-[39px] text-white">
        <div className="flex items-center gap-2">
          <svg viewBox="0 0 16 16" className="h-4 w-4"><rect x="0.500" y="0.500" width="15" height="15" rx="1.500" fill="#6cab24" stroke="#e1efc9" /><path d="M8 3l4.500 1v5L8 13 3.500 9V4z" fill="#fff" /><path d="M8 3v10M3.500 7.500h9" stroke="#6cab24" /></svg>
          <svg viewBox="0 0 16 16" className="h-4 w-4"><rect x="1.500" y="0.500" width="13" height="10" fill="#8b8b8b" stroke="#555" /><path d="M5 2l6 7M11 2L5 9" stroke="#f01c1c" strokeWidth="2" /><path d="M1 13h6v2.500H1zM9 13h6v2.500H9z" fill="#222" stroke="#ddd" strokeWidth="0.500" /></svg>
          <div className="flex h-4 w-4 items-center justify-center bg-linear-to-b from-[#5c9be8] to-[#2268c8] font-['Liberation_Sans'] text-[12px] font-bold">E</div>
          <svg viewBox="0 0 16 16" className="h-4 w-4"><g fill="none" stroke="#fff" strokeWidth="4.800"><path d="M3.500 10.500A5 5 0 0 1 10 3.500M12.500 5.500A5 5 0 0 1 6 12.500" /></g><path d="M9 0l5 4-5 3zM7 16l-5-4 5-3z" fill="#35c04e" stroke="#fff" /><g fill="none" stroke="#35c04e" strokeWidth="2.800"><path d="M3.500 10.500A5 5 0 0 1 10 3.500M12.500 5.500A5 5 0 0 1 6 12.500" /></g></svg>
          <svg viewBox="0 0 16 16" className="h-4 w-4"><path d="M2 1v15" stroke="#fff" strokeWidth="1.500" /><path d="M3 2q3-1.500 5 0t5 0v6q-3 1.500-5 0T3 8z" fill="#fff" stroke="#444" strokeWidth="0.500" /><circle cx="11" cy="11" r="4.500" fill="#d9281e" stroke="#fff" strokeWidth="0.600" /><path d="M9 9l4 4M13 9l-4 4" stroke="#fff" strokeWidth="1.300" /></svg>
          <svg viewBox="0 0 16 16" className="h-4 w-4"><rect x="2" y="3" width="7" height="11" fill="#e8edf3" stroke="#333" /><rect x="4" y="1" width="3" height="2" fill="#fff" stroke="#333" strokeWidth="0.500" /><path d="M8 5h7v4q0 2-2 2v3h-2v-3q-3 0-3-2z" fill="#fff" stroke="#333" /><path d="M9.500 1.500V5M13.500 1.500V5" stroke="#fff" strokeWidth="1.300" /></svg>
          <svg viewBox="0 0 16 16" className="h-4 w-4"><rect x="4.500" y="3.500" width="11" height="8.500" fill="#6f839b" stroke="#fff" strokeWidth="1.300" /><path d="M7 14.500h6" stroke="#fff" strokeWidth="1.500" /><rect x="0.500" y="1" width="4" height="5" fill="#fff" stroke="#333" /><path d="M2.500 6v6h2" stroke="#fff" fill="none" /></svg>
          <svg viewBox="0 0 16 16" className="h-4 w-4"><path d="M1 5.500h3L8 1.500v13l-4-4H1z" fill="#fff" stroke="#555" strokeWidth="0.600" /><path d="M10 5q2 3 0 6M12.500 3.500q3 4.500 0 9" fill="none" stroke="#fff" strokeWidth="1.100" /></svg>
        </div>
        <span className="ml-[21px] font-['Noto_Sans'] text-[11.200px] whitespace-nowrap">3:31 PM</span>
        <div className="ml-auto h-[29px] w-[14px] border border-[#4d5c6d] bg-linear-to-br from-[#a6b3c3] to-[#61738a]" />
      </div>
    </div>
  );
}

export default function App() {
  return (
    <div className="relative h-[768px] w-[1366px] overflow-hidden bg-[#8fa9c4] font-['DejaVu_Sans_Condensed',sans-serif] text-[11px] leading-[14px] text-black">
      <Defs />
      <Chrome />
      <VBoxWindow />
      <SettingsDialog />
      <svg viewBox="0 0 1366 768" className="pointer-events-none absolute inset-0 h-[768px] w-[1366px]">
        <path d="M572.500 498L304 280" stroke="#f00" strokeWidth="4" strokeLinecap="round" />
        <path d="M292.500 270l18.500 3.500-11 13z" fill="#f00" stroke="#f00" strokeWidth="2" />
        <path d="M849 558v16l4-3.500 3 6.500 2.500-1-3-6.500h5z" fill="#fff" stroke="#111" />
      </svg>
      <div className="absolute top-[344px] left-[449px] font-['Liberation_Serif',serif] text-[36px] leading-10 whitespace-nowrap text-[#f00]">mount iso file</div>
      <Taskbar />
    </div>
  );
}
